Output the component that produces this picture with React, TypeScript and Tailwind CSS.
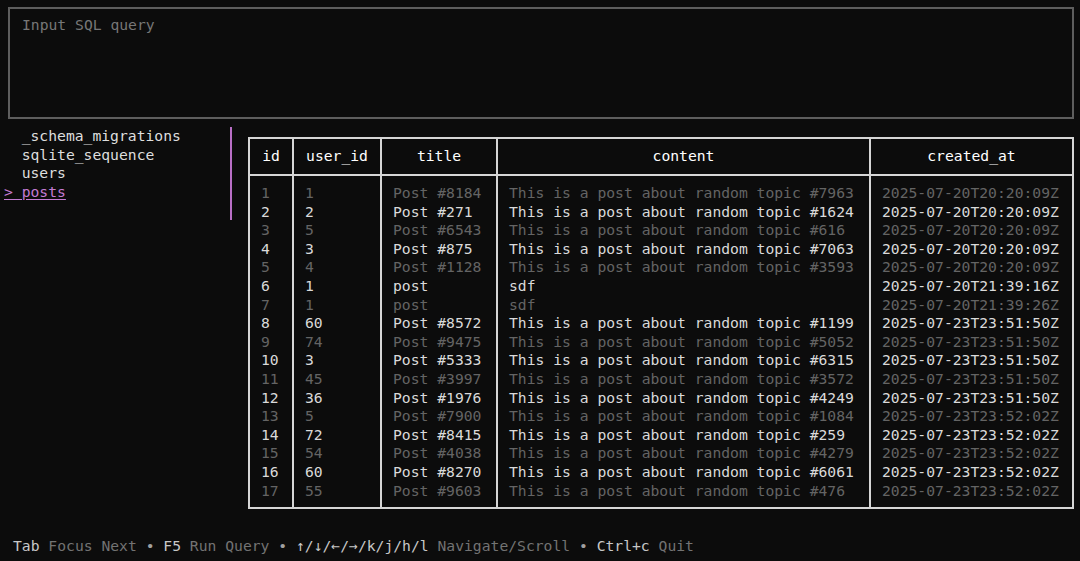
const rows: [string, string, string, string, string][] = [
  ["1", "1", "Post #8184", "This is a post about random topic #7963", "2025-07-20T20:20:09Z"],
  ["2", "2", "Post #271", "This is a post about random topic #1624", "2025-07-20T20:20:09Z"],
  ["3", "5", "Post #6543", "This is a post about random topic #616", "2025-07-20T20:20:09Z"],
  ["4", "3", "Post #875", "This is a post about random topic #7063", "2025-07-20T20:20:09Z"],
  ["5", "4", "Post #1128", "This is a post about random topic #3593", "2025-07-20T20:20:09Z"],
  ["6", "1", "post", "sdf", "2025-07-20T21:39:16Z"],
  ["7", "1", "post", "sdf", "2025-07-20T21:39:26Z"],
  ["8", "60", "Post #8572", "This is a post about random topic #1199", "2025-07-23T23:51:50Z"],
  ["9", "74", "Post #9475", "This is a post about random topic #5052", "2025-07-23T23:51:50Z"],
  ["10", "3", "Post #5333", "This is a post about random topic #6315", "2025-07-23T23:51:50Z"],
  ["11", "45", "Post #3997", "This is a post about random topic #3572", "2025-07-23T23:51:50Z"],
  ["12", "36", "Post #1976", "This is a post about random topic #4249", "2025-07-23T23:51:50Z"],
  ["13", "5", "Post #7900", "This is a post about random topic #1084", "2025-07-23T23:52:02Z"],
  ["14", "72", "Post #8415", "This is a post about random topic #259", "2025-07-23T23:52:02Z"],
  ["15", "54", "Post #4038", "This is a post about random topic #4279", "2025-07-23T23:52:02Z"],
  ["16", "60", "Post #8270", "This is a post about random topic #6061", "2025-07-23T23:52:02Z"],
  ["17", "55", "Post #9603", "This is a post about random topic #476", "2025-07-23T23:52:02Z"],
];

const columns = [
  { name: "id", width: "w-[44px]" },
  { name: "user_id", width: "w-[88px]" },
  { name: "title", width: "w-[116px]" },
  { name: "content", width: "w-[373px]" },
  { name: "created_at", width: "flex-1" },
];

const tables = ["_schema_migrations", "sqlite_sequence", "users"];

const hints: [string, string][] = [
  ["Tab", "Focus Next"],
  ["F5", "Run Query"],
  ["↑/↓/←/→/k/j/h/l", "Navigate/Scroll"],
  ["Ctrl+c", "Quit"],
];

export default function App() {
  return (
    <div
      className="flex h-[561px] w-[1080px] flex-col overflow-hidden bg-[#0c0c0c] text-[14.7px] leading-[18.6px] text-[#dcdcdc]"
      style={{ fontFamily: '"DejaVu Sans Mono", "Liberation Mono", monospace' }}
    >
      {/* query input */}
      <div className="ml-[8px] mt-[7px] h-[112px] w-[1066px] border-2 border-[#5e5e5e] pl-[12px] pt-[7px] text-[#777777]">
        Input SQL query
      </div>

      <div className="mt-[8px] flex">
        {/* table list */}
        <div className="h-[93px] w-[232px] border-r-2 border-[#b96fc6] pl-[4px]">
          {tables.map((t) => (
            <div key={t} className="whitespace-pre text-[#dedede]">
              {"  " + t}
            </div>
          ))}
          <div className="whitespace-pre text-[#c47bd3] underline underline-offset-[2px]">{"> posts"}</div>
        </div>

        {/* results */}
        <div className="ml-[16px] mt-[10px] flex h-[372px] w-[826px] flex-col border-2 border-[#d6d6d6]">
          <div className="flex h-[37px] border-b-2 border-[#d6d6d6]">
            {columns.map((c, i) => (
              <div
                key={c.name}
                className={`${c.width} flex items-center justify-center text-white ${
                  i < columns.length - 1 ? "border-r-2 border-[#d6d6d6]" : ""
                }`}
              >
                {c.name}
              </div>
            ))}
          </div>
          <div className="flex flex-1">
            {columns.map((c, ci) => (
              <div
                key={c.name}
                className={`${c.width} pl-[11px] pt-[8px] ${
                  ci < columns.length - 1 ? "border-r-2 border-[#d6d6d6]" : ""
                }`}
              >
                {rows.map((r, ri) => (
                  <div
                    key={ri}
                    className={`whitespace-pre ${ri % 2 === 1 ? "text-[#dadada]" : "text-[#646464]"}`}
                  >
                    {r[ci]}
                  </div>
                ))}
              </div>
            ))}
          </div>
        </div>
      </div>

      {/* key hints */}
      <div className="mt-[28px] whitespace-pre pl-[13px]">
        {hints.map(([k, d], i) => (
          <span key={k}>
            {i > 0 && <span className="text-[#a0a0a0]">{" • "}</span>}
            <span className="text-[#c8c8c8]">{k}</span>
            <span className="text-[#737373]">{" " + d}</span>
          </span>
        ))}
      </div>
    </div>
  );
}
